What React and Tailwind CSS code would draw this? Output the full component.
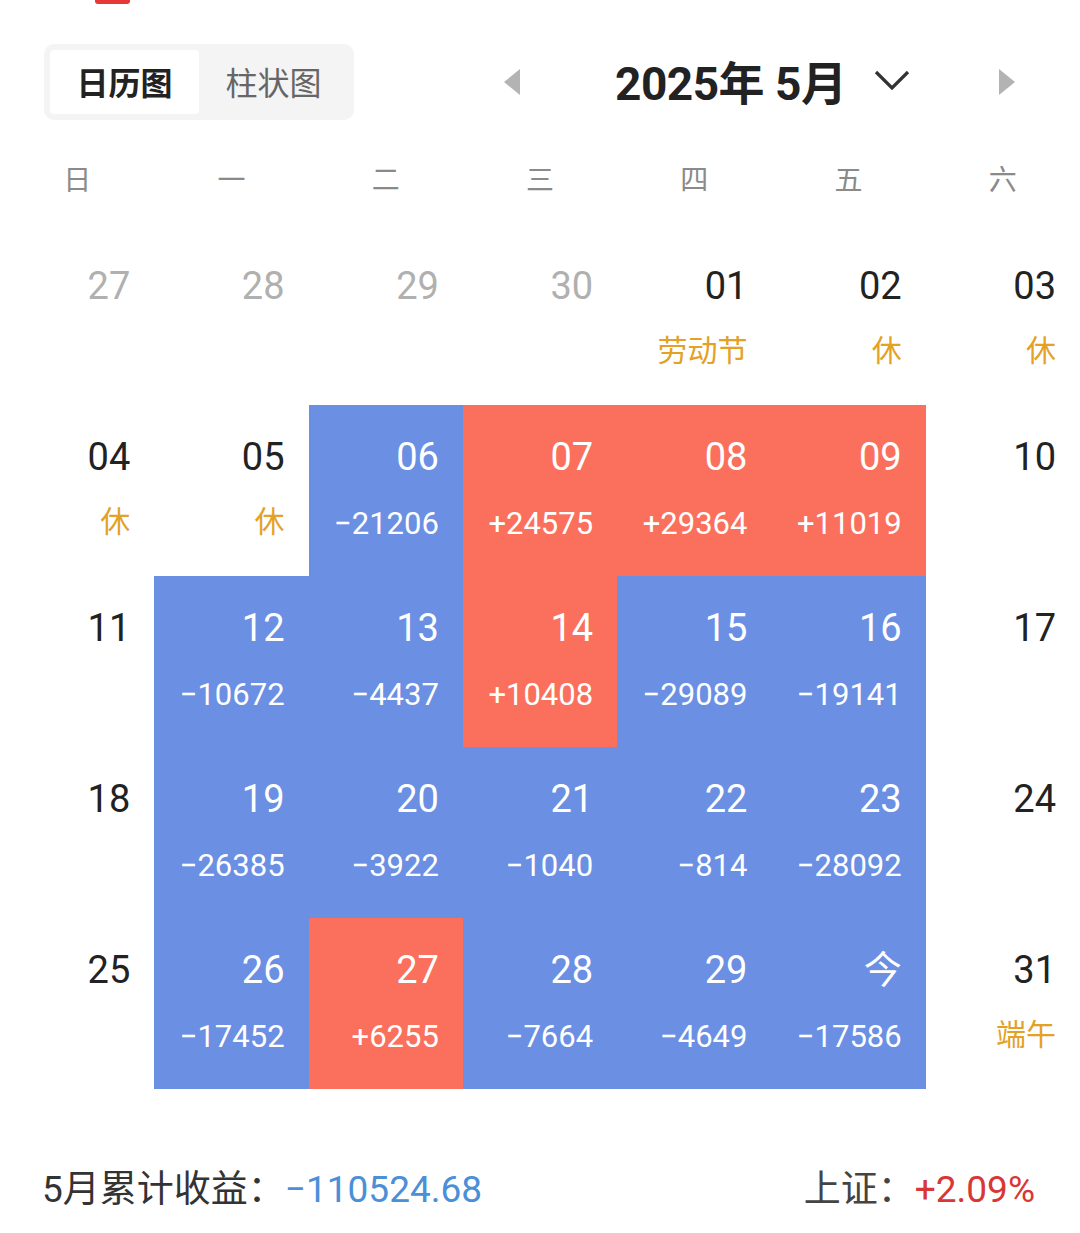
import React from 'react';

const weekdays = ['日', '一', '二', '三', '四', '五', '六'];

// bg: 'w' white, 'b' blue (loss), 'r' red (gain)
const cells = [
  { d: '27', muted: true }, { d: '28', muted: true }, { d: '29', muted: true }, { d: '30', muted: true },
  { d: '01', tag: '劳动节' }, { d: '02', tag: '休' }, { d: '03', tag: '休' },

  { d: '04', tag: '休' }, { d: '05', tag: '休' },
  { d: '06', bg: 'b', v: '−21206' }, { d: '07', bg: 'r', v: '+24575' },
  { d: '08', bg: 'r', v: '+29364' }, { d: '09', bg: 'r', v: '+11019' }, { d: '10' },

  { d: '11' }, { d: '12', bg: 'b', v: '−10672' }, { d: '13', bg: 'b', v: '−4437' },
  { d: '14', bg: 'r', v: '+10408' }, { d: '15', bg: 'b', v: '−29089' },
  { d: '16', bg: 'b', v: '−19141' }, { d: '17' },

  { d: '18' }, { d: '19', bg: 'b', v: '−26385' }, { d: '20', bg: 'b', v: '−3922' },
  { d: '21', bg: 'b', v: '−1040' }, { d: '22', bg: 'b', v: '−814' },
  { d: '23', bg: 'b', v: '−28092' }, { d: '24' },

  { d: '25' }, { d: '26', bg: 'b', v: '−17452' }, { d: '27', bg: 'r', v: '+6255' },
  { d: '28', bg: 'b', v: '−7664' }, { d: '29', bg: 'b', v: '−4649' },
  { d: '今', bg: 'b', v: '−17586' }, { d: '31', tag: '端午' },
];

const bgClass = {
  w: 'bg-white',
  b: 'bg-[#6b8fe3]',
  r: 'bg-[#fb705c]',
};

const DayCell = ({ cell }) => {
  const bg = cell.bg || 'w';
  const colored = bg !== 'w';
  const dateColor = colored ? 'text-white' : cell.muted ? 'text-[#b0b0b0]' : 'text-[#222]';
  return (
    <div className={`h-[171px] flex flex-col items-end pr-[24px] pt-[33px] ${bgClass[bg]}`}>
      <div className={`text-[38px] leading-none ${dateColor}`}>{cell.d}</div>
      {cell.v && (
        <div className="mt-[32px] text-[31px] leading-none text-white">{cell.v}</div>
      )}
      {cell.tag && (
        <div className="mt-[31px] text-[30px] leading-none text-[#e3a125]">{cell.tag}</div>
      )}
    </div>
  );
};

const App = () => {
  return (
    <div
      className="w-[1080px] h-[1233px] bg-white overflow-hidden"
      style={{ fontFamily: 'Roboto, "Noto Sans CJK SC", sans-serif' }}
    >
      <div className="ml-[95px] w-[35px] h-[4px] rounded-b-[3px] bg-[#e53935]" />

      {/* header */}
      <div className="mt-[40px] flex items-center">
        <div className="ml-[44px] w-[310px] h-[76px] rounded-[10px] bg-[#f4f4f4] flex items-center p-[6px]">
          <div className="w-[149px] h-[64px] pt-[4px] bg-white rounded-[4px] flex items-center justify-center text-[32px] font-bold text-[#222]">
            日历图
          </div>
          <div className="flex-1 h-[64px] pt-[4px] flex items-center justify-center text-[32px] text-[#666]">
            柱状图
          </div>
        </div>

        <svg className="ml-[149px]" width="18" height="28" viewBox="0 0 18 28">
          <polygon points="17,1 1,14 17,27" fill="#b3b3b3" />
        </svg>
        <div className="ml-[94px] pt-[4px] text-[46px] font-bold text-[#222] leading-none tracking-[-0.5px]">
          2025年 5月
        </div>
        <svg className="ml-[28px] mb-[4px]" width="36" height="22" viewBox="0 0 36 22">
          <polyline points="2,3 18,19 34,3" fill="none" stroke="#333" strokeWidth="3.2" />
        </svg>
        <svg className="ml-[88px]" width="18" height="28" viewBox="0 0 18 28">
          <polygon points="1,1 17,14 1,27" fill="#b3b3b3" />
        </svg>
      </div>

      {/* weekdays */}
      <div className="mt-[31px] grid grid-cols-7 h-[60px] items-center">
        {weekdays.map((w) => (
          <div key={w} className="text-center text-[28px] text-[#8a8a8a]">{w}</div>
        ))}
      </div>

      {/* calendar grid */}
      <div className="mt-[23px] grid grid-cols-7">
        {cells.map((c, i) => (
          <DayCell key={i} cell={c} />
        ))}
      </div>

      {/* footer */}
      <div className="mt-[82px] flex items-center justify-between pl-[42px] pr-[45px] text-[37px] leading-none">
        <div className="text-[#333]">
          5月累计收益：<span className="text-[#4a8fd8]">−110524.68</span>
        </div>
        <div className="text-[#444]">
          上证：<span className="text-[#d93636]">+2.09%</span>
        </div>
      </div>
    </div>
  );
};

export default App;
